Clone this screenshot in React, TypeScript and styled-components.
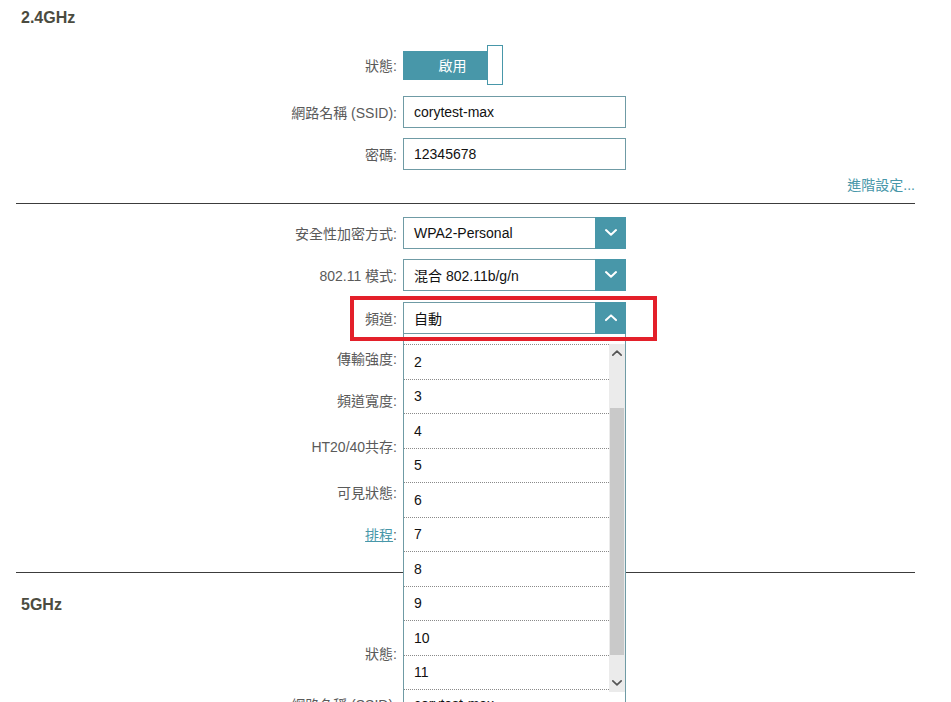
import styled, { createGlobalStyle } from 'styled-components';

const teal = '#4897a9';
const line = '#6f9ba5';

const Global = createGlobalStyle`
	html, body {
		margin: 0;
		overflow: hidden;
		background: #fff;
	}
	body {
		font-family: "Liberation Sans", "Noto Sans CJK TC", sans-serif;
		font-size: 14px;
	}
`;

const Page = styled.main`
	padding: 0 36px 0 16px;
`;

const Heading = styled.h2<{ $mt?: number }>`
	margin: ${p => p.$mt ?? 0}px 0 0;
	padding-left: 5px;
	height: 36px;
	line-height: 36px;
	font-size: 16px;
	font-weight: bold;
	color: #4b4b40;
`;

const Divider = styled.hr<{ $mt: number }>`
	margin: ${p => p.$mt}px 0 0;
	border: 0;
	border-top: 1px solid #3c3c3c;
`;

const Row = styled.div<{ $mt: number; $h?: number }>`
	position: relative;
	display: grid;
	grid-template-columns: 381px 223px;
	column-gap: 6px;
	align-items: center;
	margin-top: ${p => p.$mt}px;
	height: ${p => p.$h ?? 32}px;
`;

const Label = styled.div`
	text-align: right;
	color: #5a5a5a;
	white-space: nowrap;
`;

const LabelLink = styled.a`
	color: ${teal};
	text-decoration: underline;
`;

const Control = styled.div`
	position: relative;
	height: 100%;
	display: flex;
	align-items: center;
`;

const Switch = styled.div`
	display: flex;
	align-items: center;
	height: 40px;
`;

const SwitchTrack = styled.div`
	box-sizing: border-box;
	width: 85px;
	height: 29px;
	padding-left: 14px;
	background: ${teal};
	color: #fff;
	display: flex;
	align-items: center;
	justify-content: center;
`;

const SwitchKnob = styled.div`
	box-sizing: border-box;
	width: 16px;
	height: 40px;
	margin-left: -1px;
	background: #fff;
	border: 1px solid ${teal};
`;

const Input = styled.div`
	box-sizing: border-box;
	width: 224px;
	height: 32px;
	border: 1px solid ${line};
	padding: 0 10px;
	display: flex;
	align-items: center;
	color: #111;
	background: #fff;
`;

const Select = styled.div`
	display: flex;
	width: 223px;
	height: 32px;
`;

const SelectValue = styled.div`
	flex: 1;
	box-sizing: border-box;
	border: 1px solid ${line};
	border-right: 0;
	padding-left: 10px;
	display: flex;
	align-items: center;
	color: #111;
	background: #fff;
`;

const SelectArrow = styled.div`
	width: 31px;
	background: ${teal};
	display: flex;
	align-items: center;
	justify-content: center;
`;

const AdvancedRow = styled.div`
	margin-top: 4px;
	height: 20px;
	display: flex;
	align-items: center;
	justify-content: flex-end;
`;

const AdvancedLink = styled.a`
	color: ${teal};
	text-decoration: none;
`;

const Dropdown = styled.div`
	position: absolute;
	top: 32px;
	left: 0;
	z-index: 5;
	box-sizing: border-box;
	width: 223px;
	height: 358px;
	display: flex;
	background: #fff;
	border: 1px solid ${line};
	border-top: 0;
	border-bottom: 0;
`;

const ListViewport = styled.div`
	flex: 1;
	overflow: hidden;
`;

// list is scrolled: only the bottom edge of the row above "2" shows
const List = styled.ul`
	list-style: none;
	margin: 10px 0 0;
	padding: 0;
	border-top: 1px dotted #8a8a8a;
`;

const Item = styled.li`
	box-sizing: border-box;
	height: 34.5px;
	padding-left: 10px;
	display: flex;
	align-items: center;
	border-bottom: 1px dotted #8a8a8a;
	color: #111;
`;

const Scrollbar = styled.div`
	width: 16px;
	margin-top: 10px;
	display: flex;
	flex-direction: column;
	background: #ebebeb;
`;

const ScrollButton = styled.div`
	height: 18px;
	display: flex;
	align-items: center;
	justify-content: center;
`;

const ScrollTrack = styled.div`
	flex: 1;
`;

const ScrollThumb = styled.div`
	margin: 46px 1px 0;
	height: 247px;
	background: #c9c9c9;
`;

const Highlight = styled.div`
	position: absolute;
	left: 334px;
	top: -6px;
	z-index: 10;
	box-sizing: border-box;
	width: 307px;
	height: 45px;
	border: 4px solid #e3202a;
	pointer-events: none;
`;

const Chevron = ({ up = false, color = '#fff', size = 12 }: { up?: boolean; color?: string; size?: number }) => (
	<svg width={size} height={size * 0.6} viewBox="0 0 12 7">
		<polyline
			points={up ? '1,6 6,1.3 11,6' : '1,1 6,5.7 11,1'}
			fill="none"
			stroke={color}
			strokeWidth={2}
			strokeLinecap="round"
			strokeLinejoin="round"
		/>
	</svg>
);

const Toggle = ({ text }: { text: string }) => (
	<Switch>
		<SwitchTrack>{text}</SwitchTrack>
		<SwitchKnob />
	</Switch>
);

const Dropbox = ({ value, open = false }: { value: string; open?: boolean }) => (
	<Select>
		<SelectValue>{value}</SelectValue>
		<SelectArrow>
			<Chevron up={open} />
		</SelectArrow>
	</Select>
);

const channels = ['2', '3', '4', '5', '6', '7', '8', '9', '10', '11'];

// rows under the open list: their controls are hidden by it
const coveredRows = [
	{ label: '傳輸強度:', mt: 8 },
	{ label: '頻道寬度:', mt: 10 },
	{ label: 'HT20/40共存:', mt: 14 },
	{ label: '可見狀態:', mt: 14 },
];

const App = () => (
	<Page>
		<Global />

		<Heading>2.4GHz</Heading>

		<Row $mt={9} $h={40}>
			<Label>狀態:</Label>
			<Control><Toggle text="啟用" /></Control>
		</Row>
		<Row $mt={11}>
			<Label>網路名稱 (SSID):</Label>
			<Control><Input>corytest-max</Input></Control>
		</Row>
		<Row $mt={10}>
			<Label>密碼:</Label>
			<Control><Input>12345678</Input></Control>
		</Row>
		<AdvancedRow>
			<AdvancedLink href="#">進階設定...</AdvancedLink>
		</AdvancedRow>

		<Divider $mt={9} />

		<Row $mt={13}>
			<Label>安全性加密方式:</Label>
			<Control><Dropbox value="WPA2-Personal" /></Control>
		</Row>
		<Row $mt={10}>
			<Label>802.11 模式:</Label>
			<Control><Dropbox value="混合 802.11b/g/n" /></Control>
		</Row>
		<Row $mt={11}>
			<Label>頻道:</Label>
			<Control>
				<Dropbox value="自動" open />
				<Dropdown>
					<ListViewport>
						<List>
							{channels.map(c => <Item key={c}>{c}</Item>)}
						</List>
					</ListViewport>
					<Scrollbar>
						<ScrollButton><Chevron up color="#555" size={10} /></ScrollButton>
						<ScrollTrack><ScrollThumb /></ScrollTrack>
						<ScrollButton><Chevron color="#555" size={10} /></ScrollButton>
					</Scrollbar>
				</Dropdown>
			</Control>
			<Highlight />
		</Row>
		{coveredRows.map(r => (
			<Row key={r.label} $mt={r.mt}>
				<Label>{r.label}</Label>
				<Control />
			</Row>
		))}
		<Row $mt={10}>
			<Label><LabelLink href="#">排程</LabelLink>:</Label>
			<Control />
		</Row>

		<Divider $mt={22} />

		<Heading $mt={14}>5GHz</Heading>

		<Row $mt={10} $h={40}>
			<Label>狀態:</Label>
			<Control />
		</Row>
		<Row $mt={15}>
			<Label>網路名稱 (SSID):</Label>
			<Control><Input>corytest-max</Input></Control>
		</Row>
	</Page>
);

export default App;
